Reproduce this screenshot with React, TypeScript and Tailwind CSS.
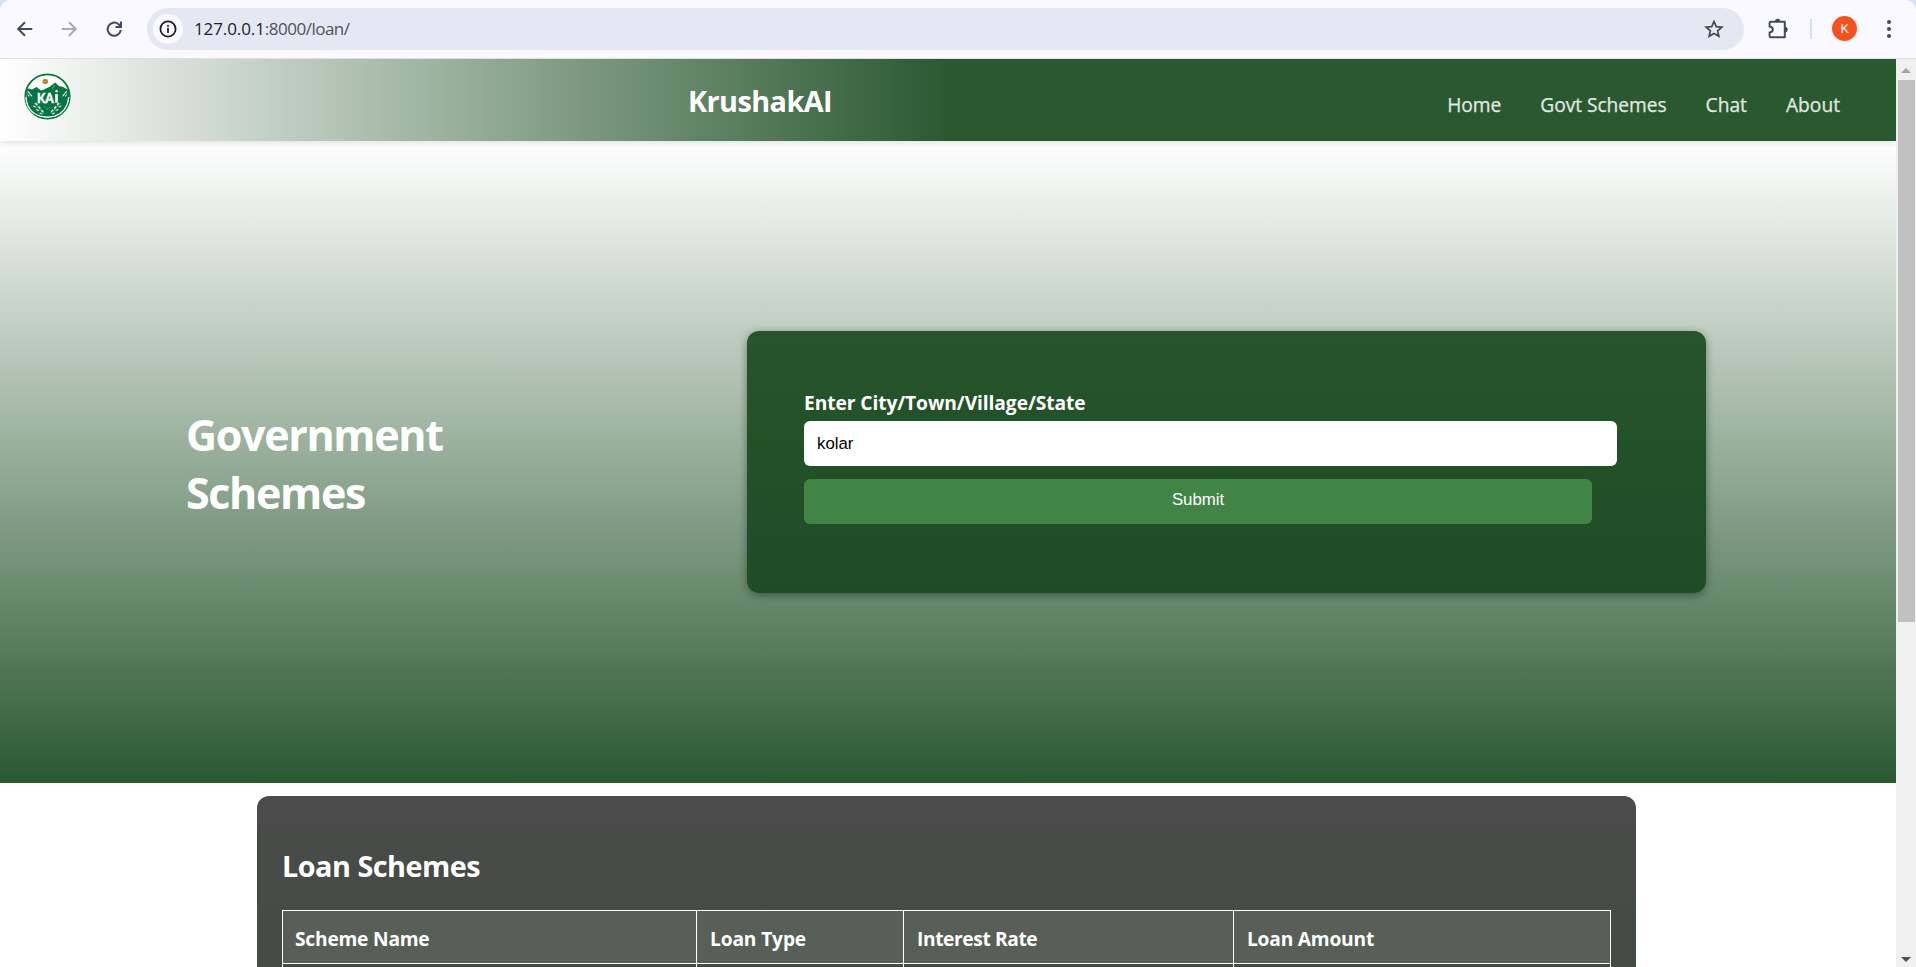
import type { ReactNode } from "react";

function Logo() {
  const leaves = [
    [12.5, 31, 50], [15.5, 34.5, 50], [18.5, 38, 50], [10.5, 33.5, 30], [13.5, 37, 30], [17, 40.5, 30],
  ];
  return (
    <svg width="47" height="47" viewBox="0 0 47 47" aria-hidden="true">
      <circle cx="23.5" cy="23.5" r="22.2" fill="#fdfefd" stroke="#087443" strokeWidth="1.800" />
      <path
        d="M2.5 16.5 5 15.5 8 16.5 12.5 14 17 17.5 20 16.5 23 15 26 13.5 31 9.5 35 13 39 14 44.5 17 Q47 31 38.5 38.5 Q31 44.5 23.5 44 Q14 44.5 7 37 Q1 29 2.5 16.5Z"
        fill="#087443"
      />
      <path d="M1.800 24 Q3 39 16 43 Q23.500 45 31 43 Q43 39 44.800 24" fill="none" stroke="#fff" strokeWidth="1.100" />
      <circle cx="21.300" cy="8.500" r="2.800" fill="#b5893a" />
      <path d="M28.500 15.500 30.500 12" stroke="#7eb34b" strokeWidth="1" />
      <text x="13" y="29.800" fontSize="13.500" fontWeight="900" fill="#fff" stroke="#fff" strokeWidth="0.400" fontFamily="Lato, sans-serif" textLength="16.800" lengthAdjust="spacingAndGlyphs">
        KA
      </text>
      <path d="M32.500 21v8.800" stroke="#fff" strokeWidth="2.600" />
      <circle cx="32.600" cy="18.300" r="1.200" fill="#fff" />
      {[false, true].map((flip) => (
        <g key={String(flip)} transform={flip ? "translate(46.500 0) scale(-1 1)" : undefined} fill="#dcece3">
          {leaves.map(([x, y, a]) => (
            <ellipse key={`${x}-${y}`} cx={x} cy={y} rx="1.700" ry="0.700" transform={`rotate(${a} ${x} ${y})`} />
          ))}
          <path d="M10 30 19.500 40.500" stroke="#dcece3" strokeWidth="0.500" />
          <ellipse cx="4.800" cy="19.500" rx="1.800" ry="0.600" transform="rotate(45 4.800 19.500)" />
          <ellipse cx="6.800" cy="22" rx="1.800" ry="0.600" transform="rotate(45 6.800 22)" />
          <ellipse cx="4.500" cy="22.500" rx="1.500" ry="0.500" transform="rotate(60 4.500 22.500)" />
        </g>
      ))}
      <path d="M20 33.500 23.300 36.500 26.600 33.500" fill="none" stroke="#a9cfb9" strokeWidth="0.700" strokeDasharray="1.200 1" />
    </svg>
  );
}

function BrowserBar() {
  return (
    <div className="bg-[#d3e0fb]">
      <div className="flex h-[59px] items-center rounded-t-[10px] border-b border-[#dddeea] bg-[#faf9ff] text-[#434b60]">
        <svg className="ml-[16px]" width="18" height="18" viewBox="0 0 18 18" fill="none" stroke="currentColor" strokeWidth="2">
          <path d="M16.300 9H2.500M9 2.200 2.200 9 9 15.800" />
        </svg>
        <svg className="ml-[26px] text-[#a9aaaf]" width="18" height="18" viewBox="0 0 18 18" fill="none" stroke="currentColor" strokeWidth="2">
          <path d="M1.700 9h13.800M9 2.200 15.800 9 9 15.800" />
        </svg>
        <svg className="ml-[27px]" width="18" height="18" viewBox="0 0 18 18" fill="none" stroke="currentColor" strokeWidth="2">
          <path d="M15.800 9.800A6.600 6.600 0 1 1 13.600 4.200L15.500 6" />
          <path d="M16 1.500V7h-5.500" />
        </svg>
        <div className="ml-[24px] flex h-[42px] w-[1597px] items-center rounded-full bg-[#e5e8f3] pr-[20px] pl-[6px]">
          <span className="flex size-[30px] items-center justify-center rounded-full bg-[#faf9ff] text-[#1f2024]">
            <svg width="18" height="18" viewBox="0 0 18 18" fill="none" stroke="currentColor" strokeWidth="1.800">
              <circle cx="9" cy="9" r="7.600" />
              <path d="M9 8v5M9 4.900v1.900" />
            </svg>
          </span>
          <span className="ml-[11px] text-[17px] leading-6 text-[#1f2024]">
            <span className="tracking-[-0.1px]">127.0.0.1</span>
            <span className="tracking-[-0.5px] text-[#505258]">:8000/loan/</span>
          </span>
          <svg className="ml-auto text-[#474747]" width="20" height="20" viewBox="0 0 20 20" fill="none" stroke="currentColor" strokeWidth="1.700">
            <path d="m10 2.500 2.250 5.150 5.600.5-4.250 3.700 1.270 5.500L10 14.450 5.130 17.350 6.400 11.850 2.150 8.150l5.600-.5Z" />
          </svg>
        </div>
        <svg className="ml-[23px]" width="23" height="22" viewBox="0 0 23 22">
          <path d="M3.800 3.800h14v15.400h-14a1.200 1.200 0 0 1-1.200-1.200v-3.600c4.300-.6 4.300-5.400 0-6V5a1.200 1.200 0 0 1 1.200-1.200Z" fill="none" stroke="currentColor" strokeWidth="2" strokeLinejoin="round" />
          <path d="M8 3.500a2.700 2.700 0 0 1 5.400 0ZM18 8.800a2.700 2.700 0 0 1 0 5.400Z" fill="currentColor" />
        </svg>
        <span className="ml-[20px] h-5 w-[2px] bg-[#d3e0fb]" />
        <span className="mb-px ml-[20px] flex size-[25px] items-center justify-center rounded-full bg-[#f4511e] font-['Roboto',sans-serif] text-[13px] text-white">K</span>
        <svg className="ml-[30px]" width="4" height="20" viewBox="0 0 4 20" fill="currentColor">
          <circle cx="2" cy="3" r="2" />
          <circle cx="2" cy="10" r="2" />
          <circle cx="2" cy="17" r="2" />
        </svg>
      </div>
    </div>
  );
}

function SiteHeader() {
  return (
    <header className="z-10 flex h-[82px] shrink-0 bg-[linear-gradient(to_right,#ffffff,#2a5930_50%)] shadow-[0_2px_6px_rgba(0,0,0,0.12)]">
      <div className="w-[688px] pt-[14px] pl-[24px]">
        <Logo />
      </div>
      <h1 className="pt-[2px] text-[28.8px] leading-[80px] font-bold tracking-[-0.55px] text-white">KrushakAI</h1>
      <nav className="mr-[56px] ml-auto flex gap-[39px] pt-[9px] text-[19.2px] leading-[73px] text-[#e2e9e3] [-webkit-text-stroke:0.25px_#e2e9e3]">
        <a href="#home">Home</a>
        <a href="#schemes" className="tracking-[-0.05px]">Govt Schemes</a>
        <a href="#chat">Chat</a>
        <a href="#about">About</a>
      </nav>
    </header>
  );
}

function Hero() {
  return (
    <section className="flex h-[642px] shrink-0 items-center bg-[linear-gradient(to_bottom,#ffffff,#2a5930)] pl-[186px]">
      <h2 className="w-[561px] pt-[3px] text-[43px] leading-[58px] font-bold tracking-[-1.35px] text-white">
        Government
        <br />
        Schemes
      </h2>
      <form className="flex h-[262px] w-[959px] flex-col rounded-xl bg-[linear-gradient(to_bottom,#26552c,#1e4d25)] px-[57px] pt-[58px] shadow-[0_2px_8px_rgba(0,0,0,0.4)]">
        <label className="text-[19.2px] leading-[27px] font-bold tracking-[-0.08px] text-white">Enter City/Town/Village/State</label>
        <input
          className="mt-[5px] h-[45px] w-[813px] rounded-md bg-white px-[13px] font-['Liberation_Sans',sans-serif] text-[16.8px] text-black outline-none"
          defaultValue="kolar"
        />
        <button type="button" className="mt-[13px] h-[45px] w-[788px] rounded-md bg-[#418546] pb-[3px] font-['Liberation_Sans',sans-serif] text-[16.8px] text-white">
          Submit
        </button>
      </form>
    </section>
  );
}

function HeadCell({ children }: { children: ReactNode }) {
  return <div className="h-[52px] border-l border-white bg-[#575f57] pt-[3px] pl-[12px] leading-[49px]">{children}</div>;
}

function LoanSchemes() {
  return (
    <section className="mt-[13px] ml-[257px] h-[600px] w-[1379px] shrink-0 rounded-t-xl bg-[linear-gradient(to_bottom,#4b4b4b,#424c43_171px)] px-[25px] pt-[42px] text-white">
      <h2 className="text-[28.8px] leading-[56px] font-bold tracking-[-0.5px]">Loan Schemes</h2>
      <div className="mt-[16px] grid grid-cols-[414px_207px_330px_377px] border-y border-r border-white text-[19.2px] font-bold">
        <HeadCell><span className="tracking-[-0.22px]">Scheme Name</span></HeadCell>
        <HeadCell><span className="pl-px tracking-[-0.15px]">Loan Type</span></HeadCell>
        <HeadCell><span className="pl-px tracking-[-0.4px]">Interest Rate</span></HeadCell>
        <HeadCell><span className="pl-px tracking-[-0.22px]">Loan Amount</span></HeadCell>
      </div>
      <div className="grid h-[54px] grid-cols-[414px_207px_330px_377px] border-r border-white">
        <div className="border-l border-white" />
        <div className="border-l border-white" />
        <div className="border-l border-white" />
        <div className="border-l border-white" />
      </div>
    </section>
  );
}

function Scrollbar() {
  return (
    <div className="flex w-[20px] flex-col items-center bg-[#f0f0f0]">
      <svg className="mt-[9px]" width="10" height="5" viewBox="0 0 10 5"><path d="M5 0 10 5H0Z" fill="#a3a3a3" /></svg>
      <div className="mt-[7px] h-[542px] w-[17px] bg-[#c1c1c1]" />
      <svg className="mt-auto mb-[5px]" width="10" height="5" viewBox="0 0 10 5"><path d="M5 5 10 0H0Z" fill="#505050" /></svg>
    </div>
  );
}

export default function App() {
  return (
    <div className="flex h-[967px] w-[1916px] flex-col overflow-hidden bg-white font-['Open_Sans',sans-serif]">
      <BrowserBar />
      <div className="flex min-h-0 flex-1">
        <main className="flex w-[1896px] flex-col overflow-hidden">
          <SiteHeader />
          <Hero />
          <LoanSchemes />
        </main>
        <Scrollbar />
      </div>
    </div>
  );
}
